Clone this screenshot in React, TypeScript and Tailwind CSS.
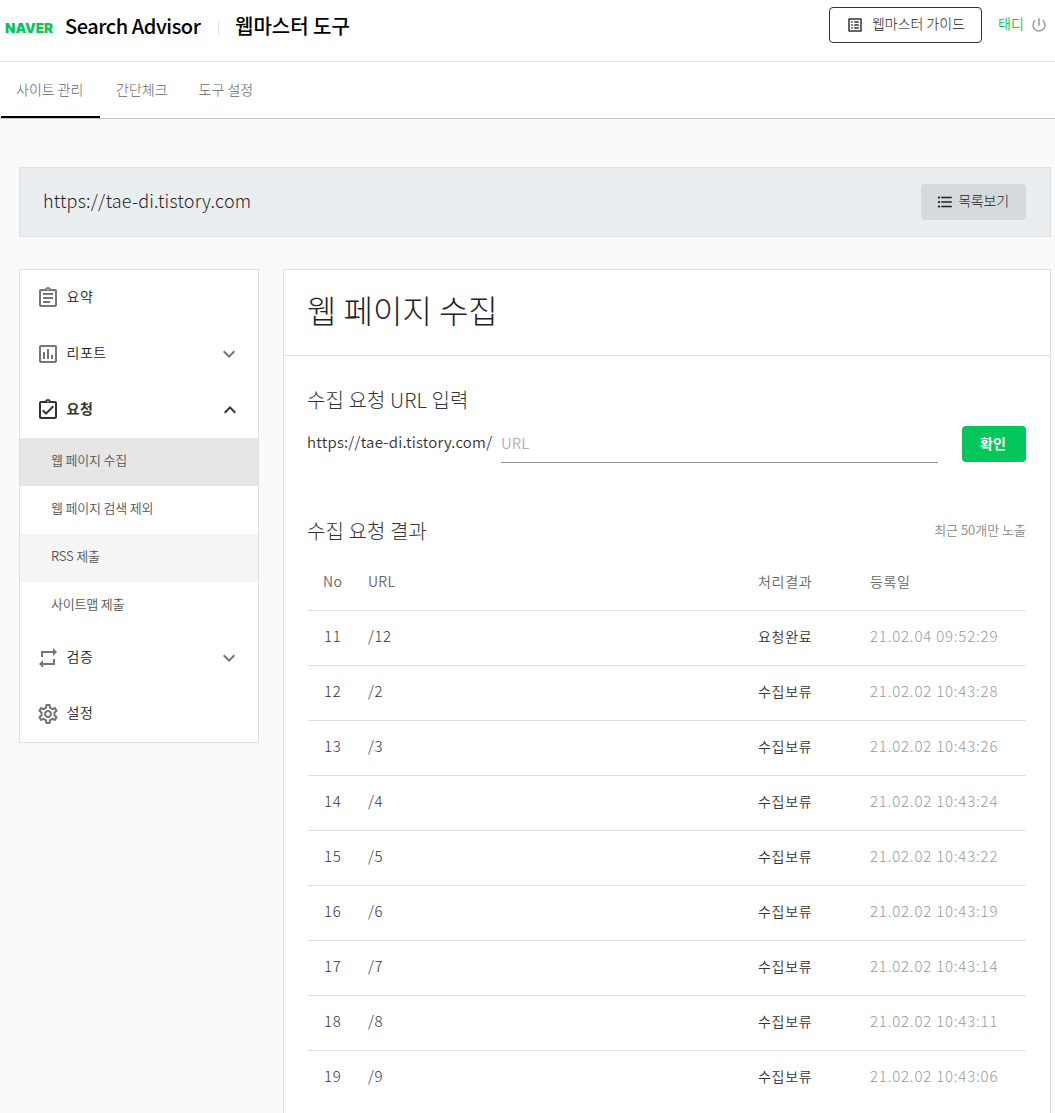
import clsx from "clsx";
import type { ReactNode } from "react";
import {
  MdFormatListBulleted,
  MdKeyboardArrowDown,
  MdKeyboardArrowUp,
  MdListAlt,
  MdOutlineAssignment,
  MdOutlineAssignmentTurnedIn,
  MdOutlinePoll,
  MdOutlineSettings,
  MdPowerSettingsNew,
  MdRepeat,
} from "react-icons/md";

const SITE = "https://tae-di.tistory.com";

const results = [
  { no: 11, url: "/12", status: "요청완료", date: "21.02.04 09:52:29" },
  { no: 12, url: "/2", status: "수집보류", date: "21.02.02 10:43:28" },
  { no: 13, url: "/3", status: "수집보류", date: "21.02.02 10:43:26" },
  { no: 14, url: "/4", status: "수집보류", date: "21.02.02 10:43:24" },
  { no: 15, url: "/5", status: "수집보류", date: "21.02.02 10:43:22" },
  { no: 16, url: "/6", status: "수집보류", date: "21.02.02 10:43:19" },
  { no: 17, url: "/7", status: "수집보류", date: "21.02.02 10:43:14" },
  { no: 18, url: "/8", status: "수집보류", date: "21.02.02 10:43:11" },
  { no: 19, url: "/9", status: "수집보류", date: "21.02.02 10:43:06" },
];

const requestMenu = [
  { label: "웹 페이지 수집", style: "bg-[#e6e6e6]" },
  { label: "웹 페이지 검색 제외", style: "" },
  { label: "RSS 제출", style: "bg-[#f5f5f5]" },
  { label: "사이트맵 제출", style: "" },
];

function Header() {
  return (
    <header className="ml-px flex h-[62px] items-start border-b border-[#e0e0e0] pl-[3.5px] pr-2">
      <span className="mt-[21px] w-[48.5px] origin-left scale-x-[1.08] text-[12.5px] font-black leading-4 text-[#03c75a] font-['Inter']">
        NAVER
      </span>
      <span className="ml-3 mt-3 w-[137px] whitespace-nowrap text-xl font-medium leading-7 tracking-[-0.45px] text-black">
        Search Advisor
      </span>
      <span className="ml-4 mt-[21px] h-3.5 w-px bg-[#e0e0e0]" />
      <span className="ml-4 mt-3 whitespace-nowrap text-xl font-medium leading-7 text-black">
        웹마스터 도구
      </span>

      <button className="ml-auto mt-[7px] flex h-9 w-[153px] items-center rounded border border-[#333] pl-4 text-[#333]">
        <MdListAlt size={18} />
        <span className="mb-1 ml-2 whitespace-nowrap text-sm font-light tracking-[-0.05px] text-[#222]">웹마스터 가이드</span>
      </button>
      <span className="ml-4 mt-[13px] w-[26px] whitespace-nowrap text-sm leading-5 text-[#03c75a]">
        태디
      </span>
      <MdPowerSettingsNew size={18} className="-mr-px ml-1.5 mt-4 text-[#999]" />
    </header>
  );
}

function Tabs() {
  return (
    <nav className="flex h-[57px] border-b border-[#c4c4c4] pl-px text-sm font-light text-[#666]">
      <a className="w-[99px] border-b-2 border-black pl-[15px] pt-[17px] leading-5">사이트 관리</a>
      <a className="ml-4 pt-[17px] leading-5">간단체크</a>
      <a className="ml-[31px] pt-[17px] leading-5">도구 설정</a>
    </nav>
  );
}

type MenuItemProps = {
  icon: ReactNode;
  label: string;
  arrow?: "up" | "down";
  active?: boolean;
};

function MenuItem({ icon, label, arrow, active }: MenuItemProps) {
  return (
    <div
      className={clsx(
        "flex h-14 items-center pl-[15.5px] pr-[17px]",
        active ? "text-[#333]" : "text-[#757575]"
      )}
    >
      {icon}
      <span
        className={clsx(
          "mb-1 ml-[7px] flex-1 text-sm tracking-[0.5px]",
          active ? "font-bold" : "text-[#222]"
        )}
      >
        {label}
      </span>
      {arrow === "down" && <MdKeyboardArrowDown size={24} />}
      {arrow === "up" && <MdKeyboardArrowUp size={24} className="-mr-px" />}
    </div>
  );
}

function Sidebar() {
  return (
    <aside className="h-[474px] w-60 border border-[#e0e0e0] bg-white">
      <MenuItem icon={<MdOutlineAssignment size={24} />} label="요약" />
      <MenuItem icon={<MdOutlinePoll size={24} />} label="리포트" arrow="down" />
      <MenuItem icon={<MdOutlineAssignmentTurnedIn size={24} />} label="요청" arrow="up" active />
      {requestMenu.map((item) => (
        <div
          key={item.label}
          className={clsx(
            "flex h-12 items-center pb-1 pl-[31px] text-[13px] tracking-[-0.2px] text-[#555]",
            item.style
          )}
        >
          {item.label}
        </div>
      ))}
      <MenuItem icon={<MdRepeat size={24} />} label="검증" arrow="down" />
      <MenuItem icon={<MdOutlineSettings size={24} />} label="설정" />
    </aside>
  );
}

function ResultTable() {
  return (
    <div className="text-sm">
      <div className="flex h-[57px] items-center border-b border-[#e0e0e0] pb-0.5 text-[#666]">
        <span className="w-[60px] pl-[15px] tracking-[0.4px]">No</span>
        <span className="w-[390px] tracking-[0.3px]">URL</span>
        <span className="w-28 tracking-[0.7px]">처리결과</span>
        <span className="tracking-[0.6px]">등록일</span>
      </div>
      {results.map((row) => (
        <div
          key={row.no}
          className="flex h-[55px] items-center border-b border-[#e0e0e0] pb-1 text-[#333] last:border-transparent"
        >
          <span className="w-[60px] pl-4 text-[15px] font-light tracking-[0.7px]">{row.no}</span>
          <span className="w-[390px] text-[15px] font-light tracking-[0.5px]">{row.url}</span>
          <span className="w-28 tracking-[0.7px]">{row.status}</span>
          <span className="whitespace-nowrap text-[15px] font-light tracking-[0.8px] text-[#999]">{row.date}</span>
        </div>
      ))}
    </div>
  );
}

function Content() {
  return (
    <main className="h-[844px] w-[768px] border-x border-t border-[#e0e0e0] bg-white">
      <h1 className="h-[86px] border-b border-[#e0e0e0] pl-[23px] pt-[15px] text-[32px] font-light leading-[48px] text-[#222]">
        웹 페이지 수집
      </h1>
      <div className="px-6 pt-[30px]">
        <h2 className="-ml-px text-xl font-light leading-7 tracking-[0.1px] text-[#333]">수집 요청 URL 입력</h2>
        <div className="mt-3 flex h-9">
          <span className="-ml-px w-[194px] whitespace-nowrap pt-1.5 text-[15px] leading-5 tracking-[0.22px] text-[#333]">
            {SITE}/
          </span>
          <input
            placeholder="URL"
            className="h-[37px] w-[437px] border-b border-[#949494] pb-1 text-[15px] outline-none placeholder:text-[#b0b0b0]"
          />
          <button className="ml-6 h-9 w-16 rounded bg-[#03c75a] pb-[3px] pr-0.5 text-sm font-bold text-white">
            확인
          </button>
        </div>

        <div className="mt-[55px] flex h-[37px] items-start justify-between">
          <h2 className="-ml-px text-xl font-light leading-7 tracking-[0.1px] text-[#333]">수집 요청 결과</h2>
          <span className="mt-[3px] text-[13px] leading-5 text-[#888]">최근 50개만 노출</span>
        </div>
        <ResultTable />
      </div>
    </main>
  );
}

export default function App() {
  return (
    <div className="h-[1113px] w-[1055px] overflow-hidden bg-[#fafafa] font-[350] font-['Noto_Sans_CJK_KR',sans-serif]">
      <div className="bg-white">
        <Header />
        <Tabs />
      </div>
      <div className="pl-[19px] pt-12">
        <section className="flex h-[70px] w-[1032px] items-center justify-between border border-[#e0e0e0] bg-[#ebeef1] px-6">
          <span className="-ml-px mb-1 text-lg font-light tracking-[0.22px] text-[#222]">{SITE}</span>
          <button className="flex h-9 w-[105px] items-center justify-center rounded bg-[#d5dade] pr-0.5 text-sm font-light tracking-[-0.2px] text-[#222]">
            <MdFormatListBulleted size={18} className="mr-1" />
            <span className="mb-1">목록보기</span>
          </button>
        </section>
        <div className="mt-8 flex items-start gap-6">
          <Sidebar />
          <Content />
        </div>
      </div>
    </div>
  );
}
